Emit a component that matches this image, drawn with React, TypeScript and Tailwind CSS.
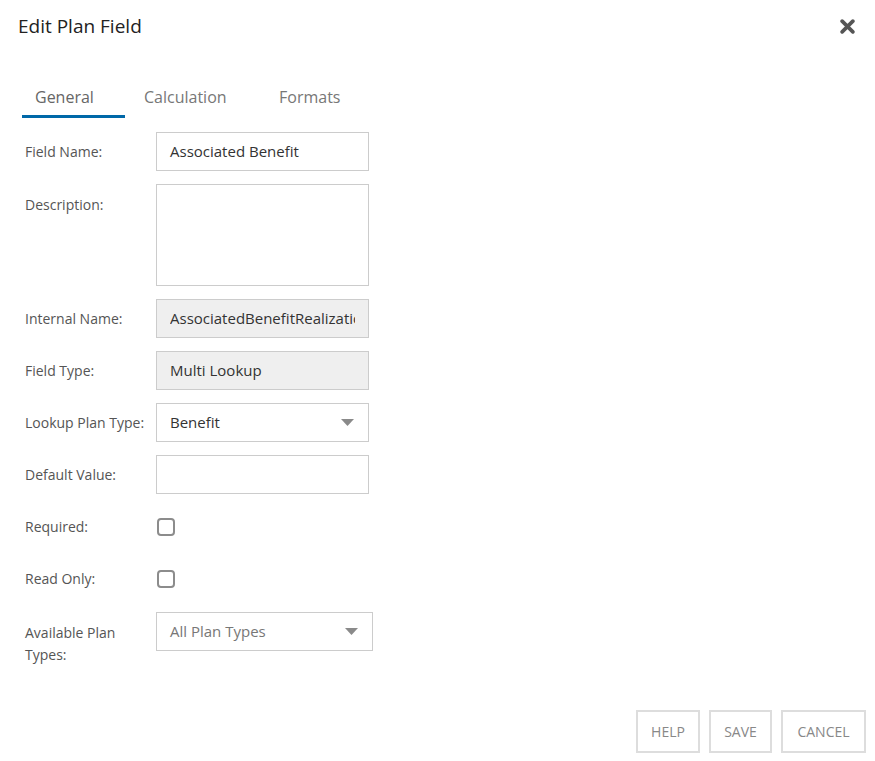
import React from "react";

const font = { fontFamily: '"Open Sans", "Noto Sans", sans-serif' };

function Row({ label, children, top = false, className = "" }: { label: React.ReactNode; children: React.ReactNode; top?: boolean; className?: string }) {
  return (
    <div className={`flex ${top ? "items-start" : "items-center"} ${className}`}>
      <div className={`w-[131px] shrink-0 text-[14px] text-[#555] leading-[22px] ${top ? "pt-[10px]" : ""}`}>{label}</div>
      {children}
    </div>
  );
}

function Caret() {
  return (
    <svg width="13" height="7" viewBox="0 0 13 7" className="shrink-0">
      <polygon points="0,0 13,0 6.5,7" fill="#8a8a8a" />
    </svg>
  );
}

export default function App() {
  return (
    <div className="w-[875px] h-[761px] bg-white relative overflow-hidden" style={font}>
      <div className="flex items-center justify-between pl-[18px] pr-[20px] pt-[12px]">
        <h1 className="text-[19px] text-[#222] leading-[28px]">Edit Plan Field</h1>
        <svg width="15" height="15" viewBox="0 0 14 14" className="mt-[1px]">
          <path d="M2 2 L12 12 M12 2 L2 12" stroke="#555" strokeWidth="3.4" strokeLinecap="round" />
        </svg>
      </div>

      <div className="flex pl-[22px] mt-[45px]">
        <div className="w-[103px] pl-[13px] pb-[6px] border-b-[3px] border-[#0068a8] text-[16px] text-[#666] leading-[24px]">General</div>
        <div className="w-[154px] pl-[19px] pb-[6px] text-[16px] text-[#777] leading-[24px]">Calculation</div>
        <div className="pb-[6px] text-[16px] text-[#777] leading-[24px]">Formats</div>
      </div>

      <div className="flex flex-col gap-[13px] pl-[25px] mt-[14px]">
        <Row label="Field Name:">
          <div className="w-[213px] h-[39px] border border-[#ccc] px-[13px] flex items-center text-[15px] text-[#333]">Associated Benefit</div>
        </Row>
        <Row label="Description:" top>
          <div className="w-[213px] h-[102px] border border-[#ccc]" />
        </Row>
        <Row label="Internal Name:">
          <div className="w-[213px] h-[39px] border border-[#ccc] bg-[#efefef] px-[13px] flex items-center text-[15px] text-[#333]">
            <div className="w-full overflow-hidden whitespace-nowrap">AssociatedBenefitRealization</div>
          </div>
        </Row>
        <Row label="Field Type:">
          <div className="w-[213px] h-[39px] border border-[#ccc] bg-[#efefef] px-[13px] flex items-center text-[15px] text-[#333]">Multi Lookup</div>
        </Row>
        <Row label="Lookup Plan Type:">
          <div className="w-[213px] h-[39px] border border-[#ccc] pl-[13px] pr-[14px] flex items-center justify-between text-[15px] text-[#333]">
            <span>Benefit</span>
            <Caret />
          </div>
        </Row>
        <Row label="Default Value:">
          <div className="w-[213px] h-[39px] border border-[#ccc]" />
        </Row>
        <Row label="Required:">
          <div className="h-[39px] flex items-center">
            <div className="ml-[1px] w-[18px] h-[18px] border-2 border-[#8c8c8c] rounded-[4px]" />
          </div>
        </Row>
        <Row label="Read Only:">
          <div className="h-[39px] flex items-center">
            <div className="ml-[1px] w-[18px] h-[18px] border-2 border-[#8c8c8c] rounded-[4px]" />
          </div>
        </Row>
        <Row label={<span className="block">Available Plan<br />Types:</span>} top className="mt-[1px]">
          <div className="w-[217px] h-[39px] border border-[#ccc] pl-[13px] pr-[14px] flex items-center justify-between text-[15px] text-[#777]">
            <span>All Plan Types</span>
            <Caret />
          </div>
        </Row>
      </div>

      <div className="absolute right-[9px] bottom-[8px] flex gap-[9px]">
        <button className="w-[64px] h-[43px] border-2 border-[#ddd] text-[14px] text-[#888]">HELP</button>
        <button className="w-[63px] h-[43px] border-2 border-[#ddd] text-[14px] text-[#888]">SAVE</button>
        <button className="w-[85px] h-[43px] border-2 border-[#ddd] text-[14px] text-[#888]">CANCEL</button>
      </div>
    </div>
  );
}
